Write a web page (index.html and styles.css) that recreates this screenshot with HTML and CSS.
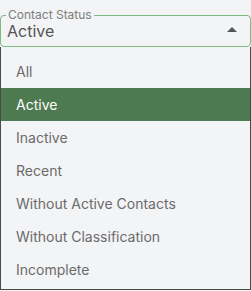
FILE: index.html
```html
<!DOCTYPE HTML>
<html lang="en">
<head>
    <meta charset="UTF-8">
    <title>Contact Status</title>
    <link rel="stylesheet" href="styles.css">
</head>
<body>
<fieldset class="field">
    <legend>Contact Status</legend>
    <div class="fieldRow">
        <span class="fieldVal">Active</span>
        <span class="caret"></span>
    </div>
</fieldset>
<ul class="menu">
    <li>All</li>
    <li class="active">Active</li>
    <li>Inactive</li>
    <li>Recent</li>
    <li>Without Active Contacts</li>
    <li>Without Classification</li>
    <li>Incomplete</li>
</ul>
</body>
</html>
```

FILE: styles.css
```css
body{
    margin:0;
    padding:0;
    background:#f3f4f6;
    font-family:Inter,"Noto Sans",sans-serif;
}
.field{
    margin:8px 0 0 0;
    padding:0 13px 5px 6px;
    border:1px solid #7db981;
    border-radius:4px;
    width:251px;
    box-sizing:border-box;
}
.field legend{
    font-size:12px;
    line-height:14px;
    color:#7d7d7d;
    padding:0 2px;
    margin-left:-1px;
}
.fieldRow{
    display:flex;
    align-items:center;
    justify-content:space-between;
    height:20px;
    margin-top:-1px;
}
.fieldVal{
    font-size:16px;
    line-height:20px;
    color:#555;
}
.caret{
    width:0;
    height:0;
    border-left:5px solid transparent;
    border-right:5px solid transparent;
    border-bottom:5px solid #555;
    margin-bottom:3px;
}
.menu{
    list-style:none;
    margin:0;
    padding:8px 0 3px 0;
    border:1px solid #4a4a4a;
    border-top:none;
    height:243px;
    box-sizing:border-box;
}
.menu li{
    height:33px;
    line-height:33px;
    padding-left:15px;
    font-size:14px;
    color:#6b6b6b;
}
.menu li.active{
    background:#4e7a51;
    color:#fff;
}
```
